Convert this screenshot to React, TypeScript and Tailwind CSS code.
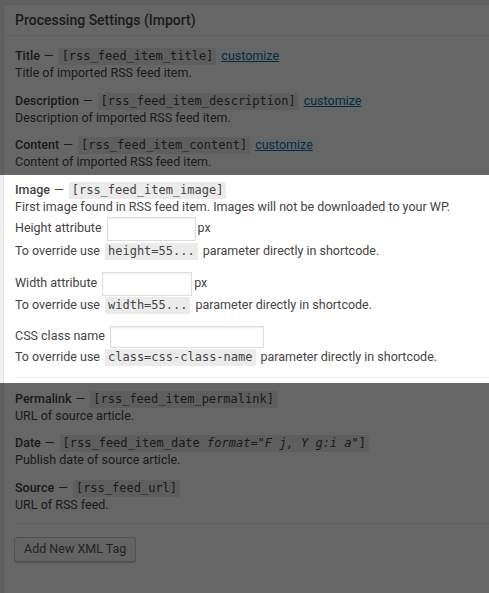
import React from "react";

const mono = "font-['DejaVu_Sans_Mono',Menlo,monospace]";

const Code: React.FC<{ children: React.ReactNode }> = ({ children }) => (
  <code
    className={`${mono} bg-[#ebebeb] px-[3px] py-[1px] text-[12px] leading-[15px] text-[#444]`}
  >
    {children}
  </code>
);

type Field = {
  label: string;
  code: React.ReactNode;
  note: string;
  customize?: boolean;
  last?: boolean;
};

const topFields: Field[] = [
  { label: "Title", code: "[rss_feed_item_title]", note: "Title of imported RSS feed item.", customize: true },
  {
    label: "Description",
    code: "[rss_feed_item_description]",
    note: "Description of imported RSS feed item.",
    customize: true,
  },
  { label: "Content", code: "[rss_feed_item_content]", note: "Content of imported RSS feed item.", customize: true },
];

const bottomFields: Field[] = [
  { label: "Permalink", code: "[rss_feed_item_permalink]", note: "URL of source article." },
  {
    label: "Date",
    code: (
      <>
        [rss_feed_item_date <i>format="F j, Y g:i a"</i>]
      </>
    ),
    note: "Publish date of source article.",
  },
  { label: "Source", code: "[rss_feed_url]", note: "URL of RSS feed.", last: true },
];

const FieldHead: React.FC<{ label: string; code: React.ReactNode; customize?: boolean }> = ({
  label,
  code,
  customize,
}) => (
  <div className="flex h-[17px] items-center whitespace-nowrap">
    <span className="font-medium">{label}</span>
    <span className="ml-[4px] mr-[5px]">—</span>
    <Code>{code}</Code>
    {customize && (
      <a href="#" className="ml-[5px] text-[#0073aa] underline">
        customize
      </a>
    )}
  </div>
);

const FieldBlock: React.FC<{ field: Field }> = ({ field }) => (
  <div className={field.last ? "mb-[13px] border-b border-[#eee] pb-[10.5px] pl-px" : "mb-[11.5px] pl-px"}>
    <FieldHead label={field.label} code={field.code} customize={field.customize} />
    <div className="leading-[16px]">{field.note}</div>
  </div>
);

const AttrRow: React.FC<{ label: string; inputWidth: string; px?: boolean; className?: string }> = ({
  label,
  inputWidth,
  px,
  className,
}) => (
  <div className={`flex items-center ${className ?? ""}`}>
    <span className="mr-[5px]">{label}</span>
    <input
      type="text"
      className={`${inputWidth} h-full border border-[#ddd] bg-white shadow-[inset_0_1px_2px_rgba(0,0,0,0.07)] outline-none`}
    />
    {px && <span className="ml-[2px]">px</span>}
  </div>
);

const OverrideLine: React.FC<{ code: string; className?: string }> = ({ code, className }) => (
  <div className={`flex h-[17px] items-center whitespace-nowrap ${className ?? ""}`}>
    <span className="mr-[5px]">To override use</span>
    <Code>{code}</Code>
    <span className="ml-[5px]">parameter directly in shortcode.</span>
  </div>
);

export default function App() {
  return (
    <div className="h-screen overflow-hidden bg-[#f1f1f1] pl-[3px] pt-[4px] font-['Roboto',Arial,sans-serif] text-[12.5px] text-[#444]">
      <div className="w-[540px] border border-[#e5e5e5] bg-white pb-[60px] shadow-[0_1px_1px_rgba(0,0,0,0.04)]">
        <h2 className="flex h-[31px] items-center border-b border-[#eee] px-[11px] text-[14px] font-medium">
          Processing Settings (Import)
        </h2>

        <div className="pl-[10px] pt-[12px]">
          {topFields.map((f) => (
            <FieldBlock key={f.label} field={f} />
          ))}

          <div className="relative mb-[13px] border-b border-[#eee] pb-[11px] pl-px">
            <div className="pointer-events-none absolute -bottom-[6px] -left-[14px] -top-[6.5px] right-0 z-10 shadow-[0_0_0_2000px_rgba(0,0,0,0.6)]" />
            <FieldHead label="Image" code="[rss_feed_item_image]" />
            <div className="leading-[16px]">
              First image found in RSS feed item. Images will not be downloaded to your WP.
            </div>
            <AttrRow label="Height attribute" inputWidth="w-[89px]" px className="mt-[2px] h-[24px]" />
            <OverrideLine code="height=55..." className="mt-[2px]" />
            <AttrRow label="Width attribute" inputWidth="w-[90px]" px className="mt-[12px] h-[24px]" />
            <OverrideLine code="width=55..." className="mt-[1px]" />
            <AttrRow label="CSS class name" inputWidth="w-[154px]" className="mt-[12px] h-[22px]" />
            <OverrideLine code="class=css-class-name" className="mt-[1px]" />
          </div>

          {bottomFields.map((f) => (
            <FieldBlock key={f.label} field={f} />
          ))}

          <button className="h-[25px] rounded-[3px] border border-[#ccc] bg-[#f7f7f7] px-[9px] text-[12.5px] text-[#555] shadow-[0_1px_0_#ccc]">
            Add New XML Tag
          </button>
        </div>
      </div>
    </div>
  );
}
